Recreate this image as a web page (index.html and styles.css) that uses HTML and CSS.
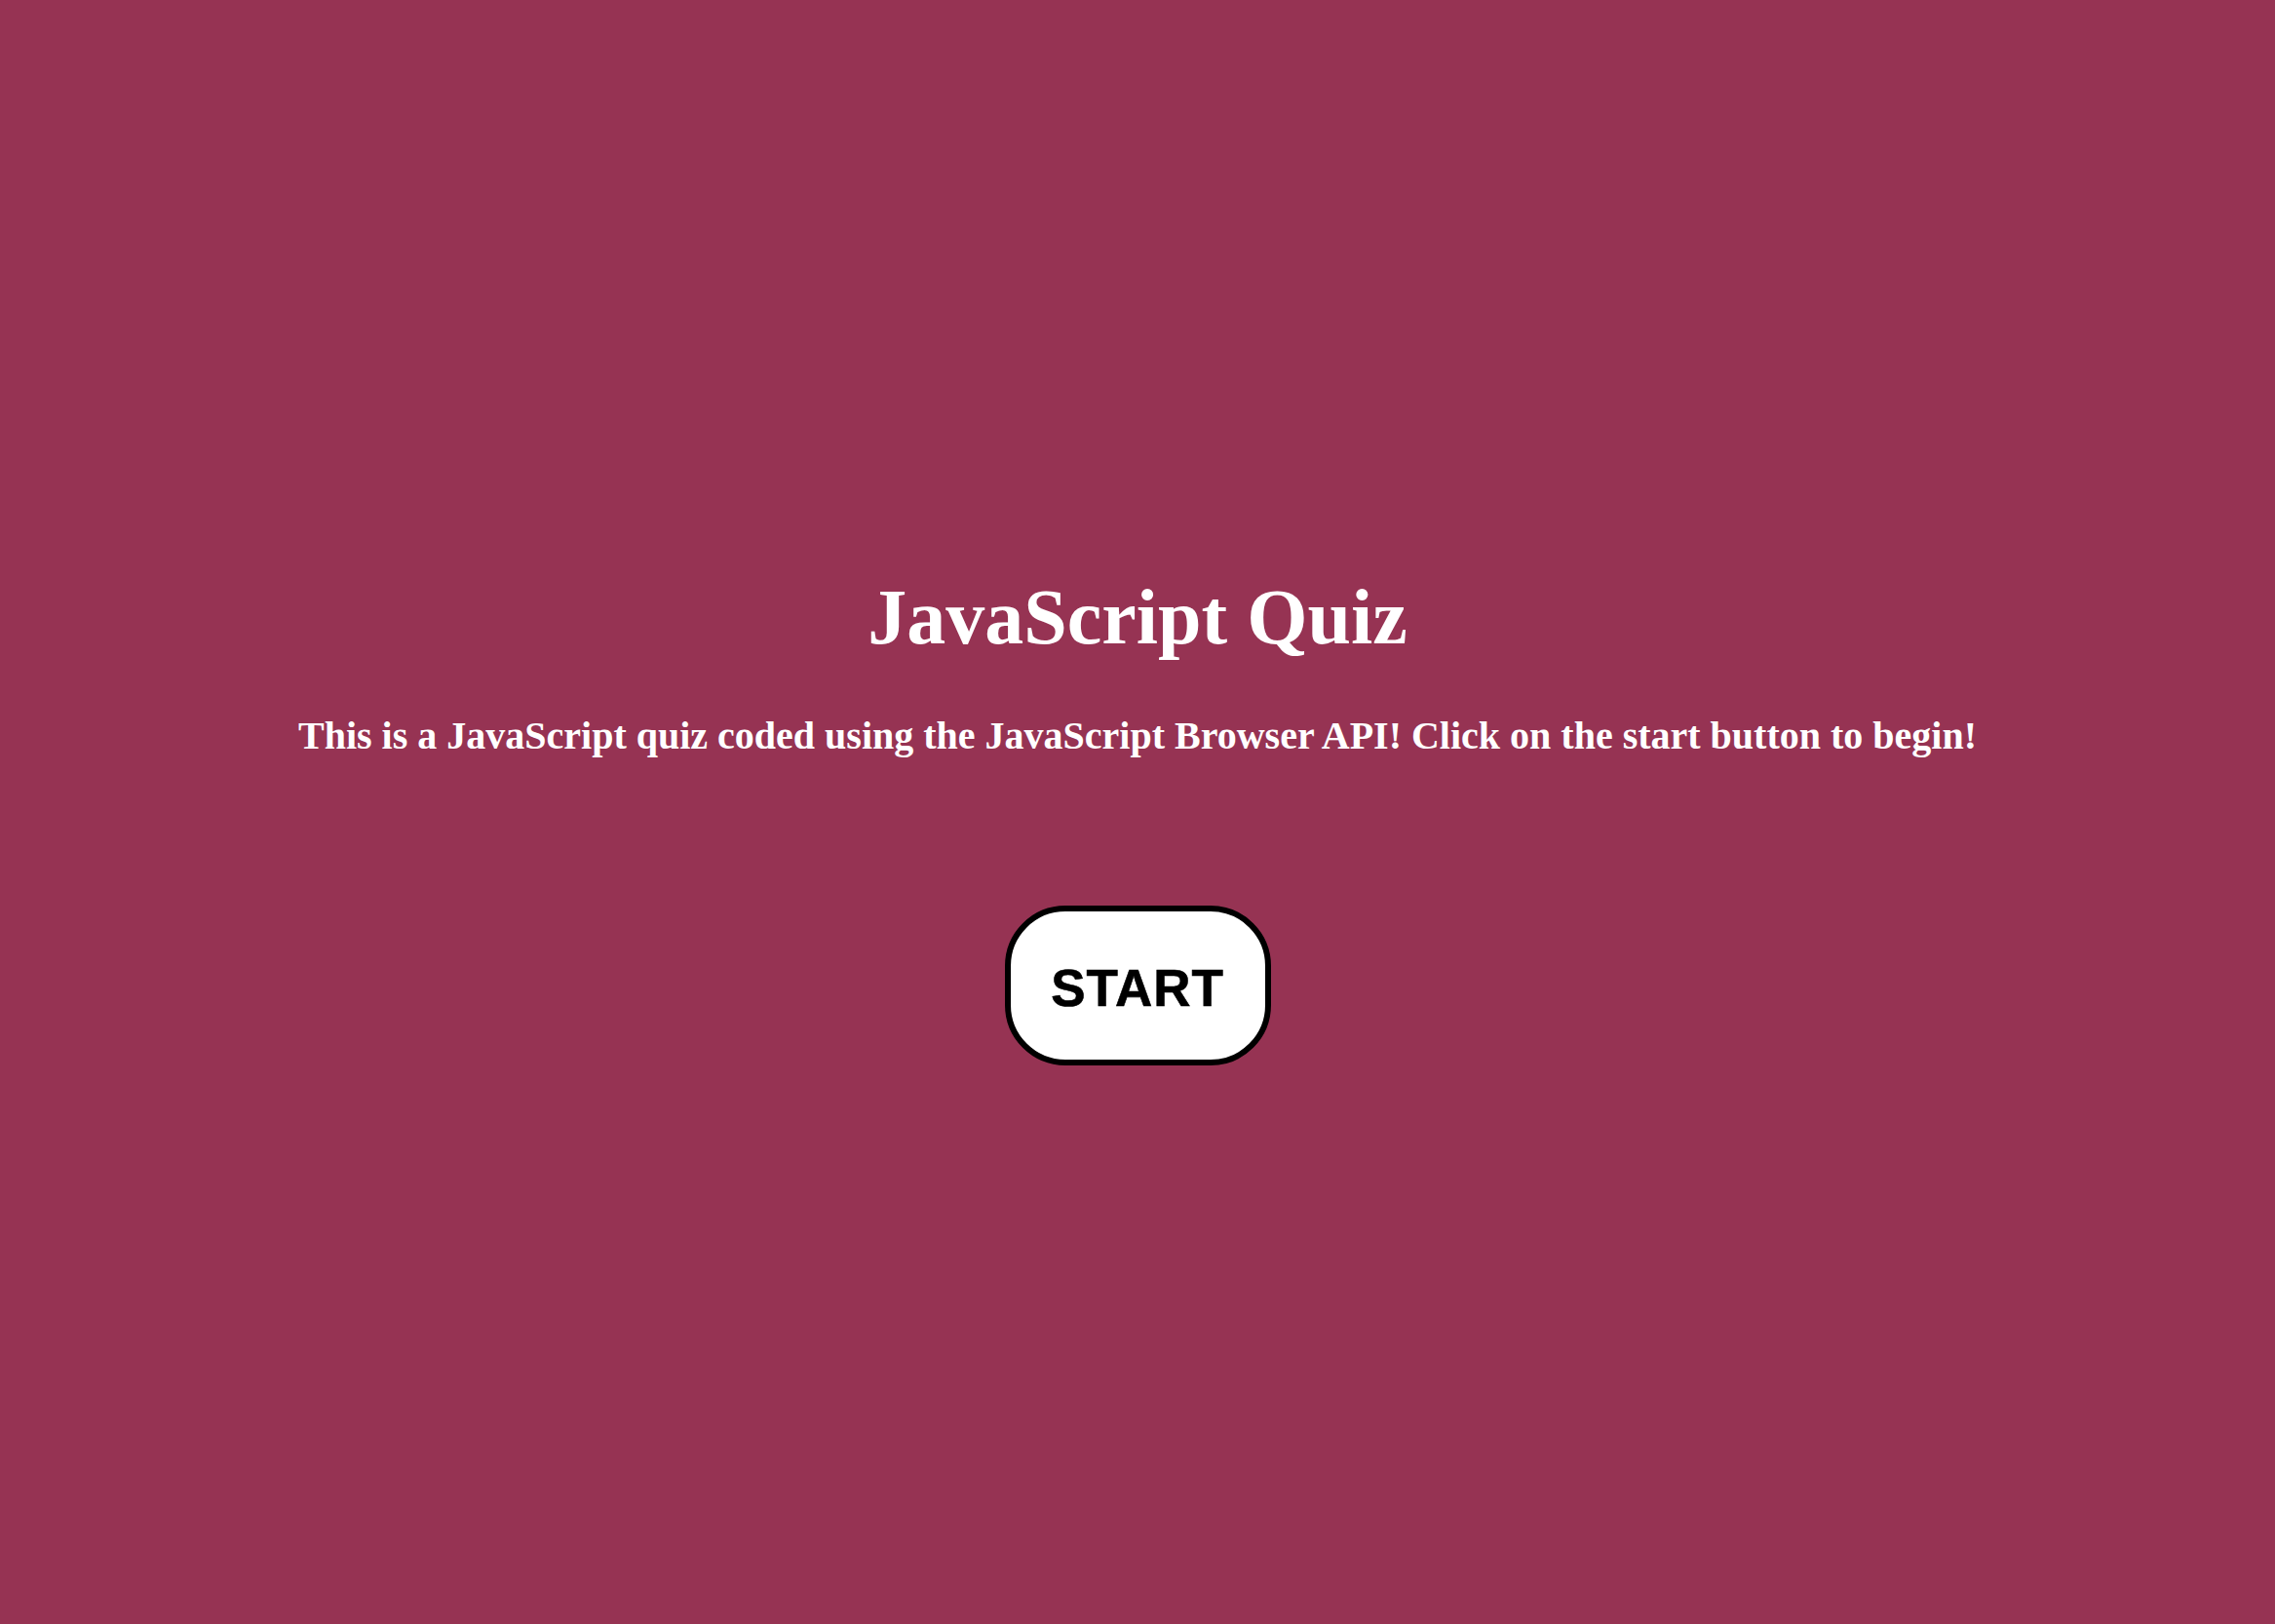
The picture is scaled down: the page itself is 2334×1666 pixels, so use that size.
FILE: index.html
```html
<!DOCTYPE html>
<html lang="en">
<head>
<meta charset="utf-8">
<title>JavaScript Quiz</title>
<link rel="stylesheet" href="styles.css">
</head>
<body>
<main class="intro">
  <h1 class="title">JavaScript Quiz</h1>
  <p class="lead">This is a JavaScript quiz coded using the JavaScript Browser API! Click on the start button to begin!</p>
  <button class="start" type="button">START</button>
</main>
</body>
</html>
```
FILE: styles.css
```css
html, body {
  margin: 0;
  padding: 0;
  height: 100%;
}
body {
  background: #963353;
  font-family: "Liberation Serif", "Times New Roman", serif;
  color: #ffffff;
}
.intro {
  box-sizing: border-box;
  min-height: 100vh;
  padding-top: 14px;
  display: flex;
  flex-direction: column;
  align-items: center;
  justify-content: center;
  text-align: center;
}
.title {
  margin: 0;
  font-size: 80px;
  font-weight: bold;
  line-height: 1.15;
}
.lead {
  margin: 52px 0 0;
  font-size: 40px;
  font-weight: bold;
  line-height: 1.2;
}
.start {
  box-sizing: border-box;
  margin-top: 150px;
  width: 273px;
  height: 164px;
  padding: 5px 0 0;
  background: #ffffff;
  border: 6px solid #000000;
  border-radius: 62px;
  font-family: "Liberation Sans", Arial, sans-serif;
  font-weight: bold;
  font-size: 53px;
  letter-spacing: 1px;
  -webkit-text-stroke: 0.6px #000000;
  color: #000000;
}
```
